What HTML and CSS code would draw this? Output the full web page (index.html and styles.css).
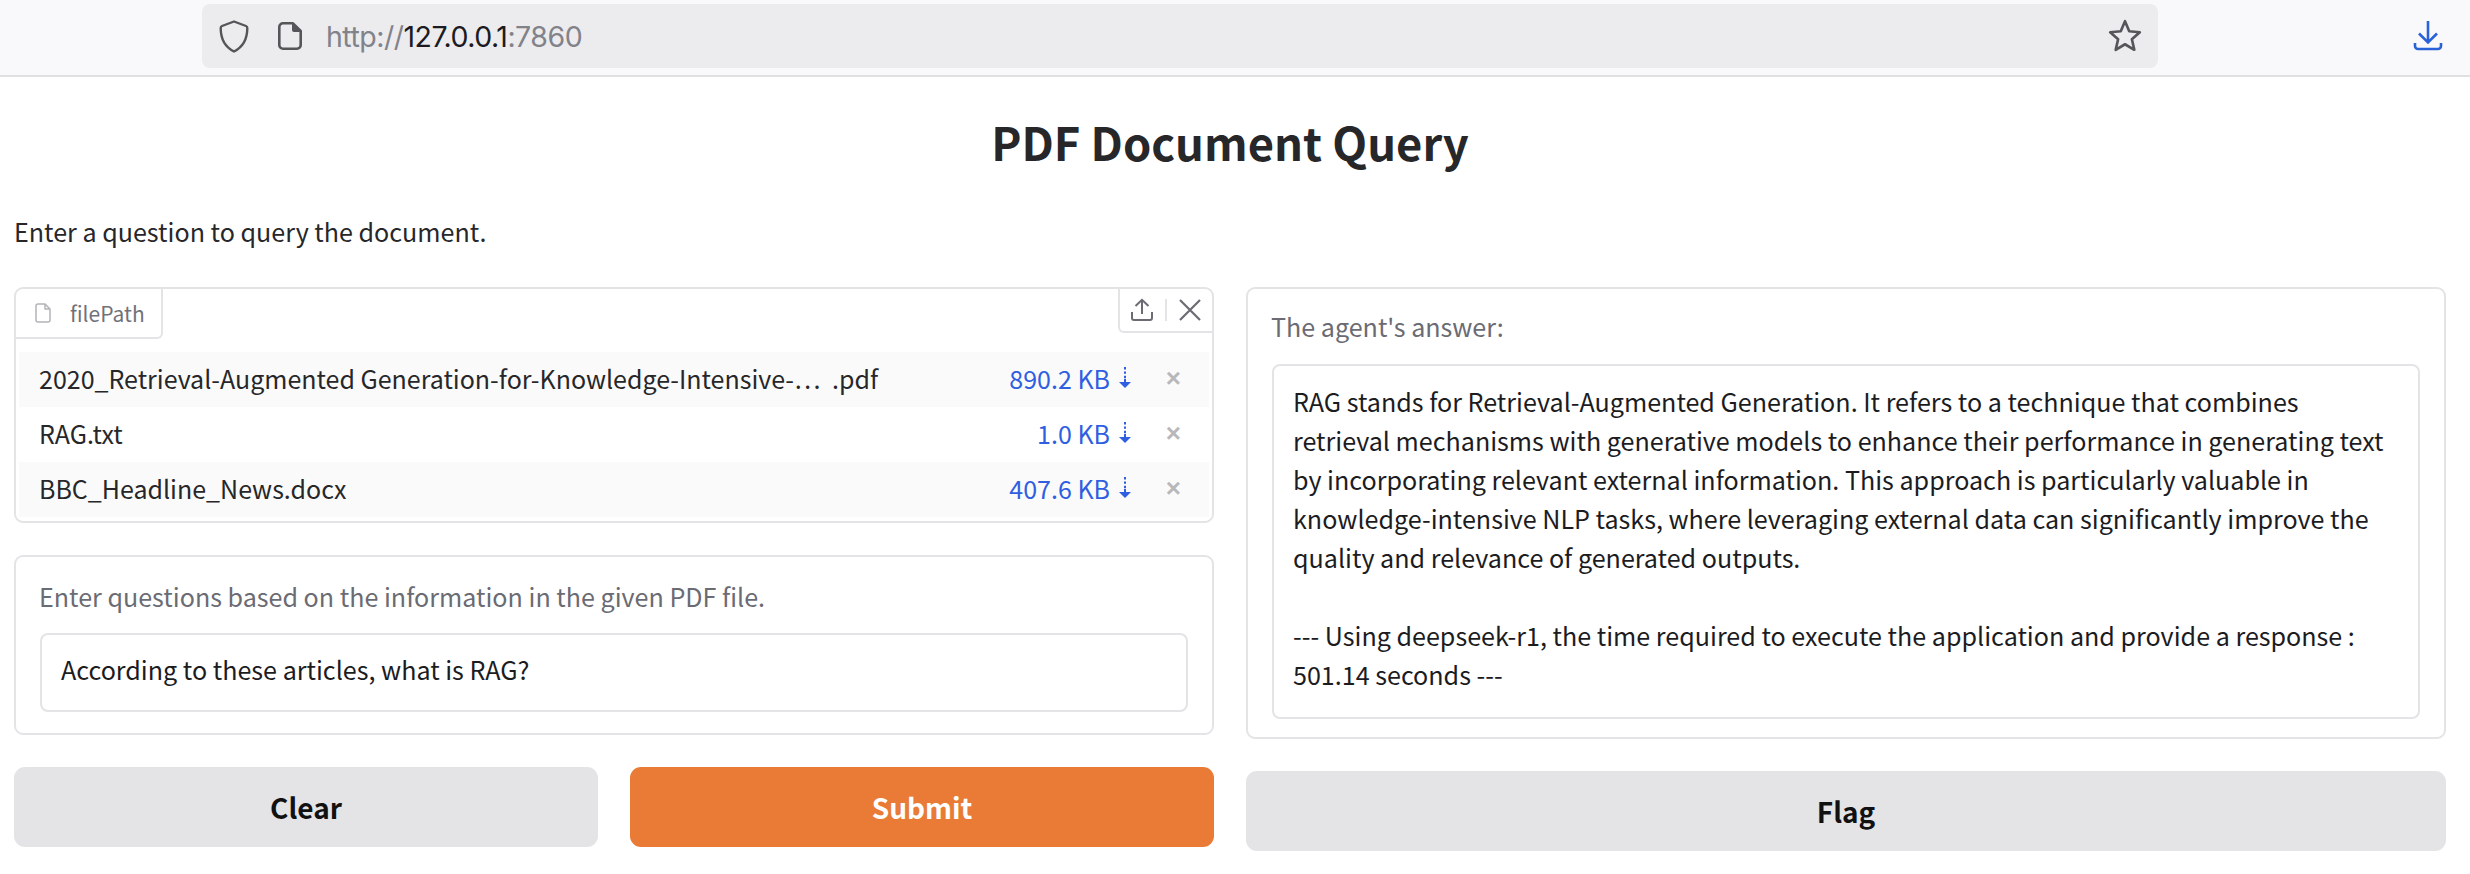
FILE: index.html

```html
<!DOCTYPE html>
<html lang="en">
<head>
  <meta charset="UTF-8">
  <title>PDF Document Query</title>
  <link rel="stylesheet" href="styles.css">
</head>
<body>
<header class="browser-bar">
  <div class="url-bar">
    <svg class="icon-shield" viewBox="0 0 30 33" width="30" height="33"><path d="M15 1.500 L27 6 C28 6.400 28.300 7 28.300 8 C28.300 18 24 27 15 31.500 C6 27 1.700 18 1.700 8 C1.700 7 2 6.400 3 6 Z" fill="none" stroke="#55555a" stroke-width="2.400" stroke-linejoin="round"/></svg>
    <svg class="icon-page" viewBox="0 0 24 28" width="24" height="28"><path d="M5 1.300 H15 L22.700 9 V23 A3.700 3.700 0 0 1 19 26.700 H5 A3.700 3.700 0 0 1 1.300 23 V5 A3.700 3.700 0 0 1 5 1.300 Z" fill="none" stroke="#55555a" stroke-width="2.600" stroke-linejoin="round"/><path d="M14 1.300 L22.700 10 H16 A2 2 0 0 1 14 8 Z" fill="#55555a"/></svg>
    <span class="url-text">http://<b>127.0.0.1</b>:7860</span>
    <svg class="icon-star" viewBox="0 0 34 34" width="36" height="36"><path d="M17 3 L21 12.500 L31 13.500 L23.500 20 L25.800 30 L17 24.800 L8.200 30 L10.500 20 L3 13.500 L13 12.500 Z" fill="none" stroke="#55555a" stroke-width="2.500" stroke-linejoin="round"/></svg>
  </div>
  <svg class="icon-download" viewBox="0 0 30 34" width="30" height="34"><path d="M15 2 V23 M6 14.500 L15 23.500 L24 14.500" fill="none" stroke="#2a63d8" stroke-width="2.600"/><path d="M2 24 V27 A3 3 0 0 0 5 30 H25 A3 3 0 0 0 28 27 V24" fill="none" stroke="#2a63d8" stroke-width="2.600"/></svg>
</header>

<main class="app">
  <h1 class="title">PDF Document Query</h1>
  <p class="intro">Enter a question to query the document.</p>

  <div class="columns">
    <section class="col">
      <div class="panel file-panel">
        <div class="file-head">
          <div class="file-tab">
            <svg viewBox="0 0 16 20" width="16" height="20"><path d="M3 1 H10 L15 6 V17 A2 2 0 0 1 13 19 H3 A2 2 0 0 1 1 17 V3 A2 2 0 0 1 3 1 Z M10 1 V6 H15" fill="none" stroke="#b4b4b9" stroke-width="1.500" stroke-linejoin="round"/></svg>
            <span>filePath</span>
          </div>
          <div class="file-actions">
            <svg viewBox="0 0 24 24" width="24" height="24"><path d="M2 14 V20 A2 2 0 0 0 4 22 H20 A2 2 0 0 0 22 20 V14 M12 16 V2 M5.500 8 L12 1.800 L18.500 8" fill="none" stroke="#6b6b73" stroke-width="2"/></svg>
            <i class="action-sep"></i>
            <svg viewBox="0 0 24 24" width="24" height="24"><path d="M2 2 L22 22 M22 2 L2 22" fill="none" stroke="#6b6b73" stroke-width="2.200"/></svg>
          </div>
        </div>
        <div class="file-list">
          <div class="file-row">
            <span class="file-name">2020_Retrieval-Augmented Generation-for-Knowledge-Intensive-…<span class="file-ext"> .pdf</span></span>
            <span class="file-size">890.2 KB</span>
            <svg class="arrow" viewBox="0 0 12 22" width="12" height="22"><path d="M6 0 V13" fill="none" stroke="#2f5fe0" stroke-width="2" stroke-dasharray="2.400 2"/><path d="M6 12 V17" fill="none" stroke="#2f5fe0" stroke-width="2"/><path d="M0 15 H12 L6 21 Z" fill="#2f5fe0"/></svg>
            <span class="file-x">×</span>
          </div>
          <div class="file-row">
            <span class="file-name">RAG.txt</span>
            <span class="file-size">1.0 KB</span>
            <svg class="arrow" viewBox="0 0 12 22" width="12" height="22"><path d="M6 0 V13" fill="none" stroke="#2f5fe0" stroke-width="2" stroke-dasharray="2.400 2"/><path d="M6 12 V17" fill="none" stroke="#2f5fe0" stroke-width="2"/><path d="M0 15 H12 L6 21 Z" fill="#2f5fe0"/></svg>
            <span class="file-x">×</span>
          </div>
          <div class="file-row">
            <span class="file-name">BBC_Headline_News.docx</span>
            <span class="file-size">407.6 KB</span>
            <svg class="arrow" viewBox="0 0 12 22" width="12" height="22"><path d="M6 0 V13" fill="none" stroke="#2f5fe0" stroke-width="2" stroke-dasharray="2.400 2"/><path d="M6 12 V17" fill="none" stroke="#2f5fe0" stroke-width="2"/><path d="M0 15 H12 L6 21 Z" fill="#2f5fe0"/></svg>
            <span class="file-x">×</span>
          </div>
        </div>
      </div>

      <div class="panel field-panel">
        <div class="field-label">Enter questions based on the information in the given PDF file.</div>
        <div class="field-box question">According to these articles, what is RAG?</div>
      </div>

      <div class="btn-row">
        <button class="btn">Clear</button>
        <button class="btn btn-primary">Submit</button>
      </div>
    </section>

    <section class="col">
      <div class="panel field-panel answer-panel">
        <div class="field-label">The agent's answer:</div>
        <div class="field-box answer">RAG stands for Retrieval-Augmented Generation. It refers to a technique that combines retrieval mechanisms with generative models to enhance their performance in generating text by incorporating relevant external information. This approach is particularly valuable in knowledge-intensive NLP tasks, where leveraging external data can significantly improve the quality and relevance of generated outputs.

--- Using deepseek-r1, the time required to execute the application and provide a response : 501.14 seconds ---</div>
      </div>
      <div class="btn-row">
        <button class="btn">Flag</button>
      </div>
    </section>
  </div>
</main>
</body>
</html>
```

FILE: styles.css

```css
html, body {
  margin: 0;
  padding: 0;
  background: #fff;
  overflow: hidden;
  font-family: "Noto Sans CJK SC", "Noto Sans", sans-serif;
  color: #27272a;
}
svg {
  flex: none;
}
.browser-bar {
  height: 75px;
  background: #f9f9fb;
  border-bottom: 2px solid #e0e0e2;
  display: flex;
  align-items: flex-start;
  padding-left: 202px;
}
.url-bar {
  width: 1956px;
  height: 64px;
  margin-top: 4px;
  background: #ececee;
  border-radius: 8px;
  display: flex;
  align-items: center;
  padding: 0 15px 0 17px;
  box-sizing: border-box;
}
.icon-page {
  margin-left: 29px;
}
.url-text {
  margin-left: 24px;
  font-family: Inter, "Liberation Sans", sans-serif;
  font-size: 28.5px;
  letter-spacing: -0.5px;
  color: #82828a;
  flex: 1;
}
.url-text b {
  font-weight: 400;
  color: #1c1b22;
}
.icon-download {
  margin: 19px 0 0 255px;
}
.app {
  padding: 0 24px 0 14px;
}
.title {
  margin: 0;
  padding-top: 38px;
  font-size: 45.3px;
  line-height: 52px;
  font-weight: 700;
  text-align: center;
}
.intro {
  margin: 0;
  padding-top: 44px;
  font-size: 25.1px;
  line-height: 40px;
}
.columns {
  margin-top: 36px;
  display: grid;
  grid-template-columns: 1200px 1200px;
  gap: 32px;
}
.col {
  display: flex;
  flex-direction: column;
}
.panel {
  background: #fff;
  border: 2px solid #e4e4e7;
  border-radius: 9px;
  box-sizing: border-box;
}
.file-panel {
  height: 236px;
}
.file-head {
  height: 63px;
  display: flex;
  justify-content: space-between;
  align-items: flex-start;
}
.file-tab {
  height: 50px;
  width: 147px;
  box-sizing: border-box;
  border-right: 2px solid #e4e4e7;
  border-bottom: 2px solid #e4e4e7;
  border-bottom-right-radius: 6px;
  display: flex;
  align-items: center;
  padding-left: 19px;
  gap: 19px;
  font-size: 21px;
  color: #71717a;
}
.file-actions {
  height: 44px;
  width: 94px;
  box-sizing: border-box;
  border-left: 2px solid #e4e4e7;
  border-bottom: 2px solid #e4e4e7;
  border-bottom-left-radius: 6px;
  display: flex;
  align-items: center;
  padding-left: 10px;
}
.action-sep {
  width: 2px;
  height: 22px;
  background: #e4e4e7;
  margin: 0 11px;
}
.file-list {
  margin: 0 3px;
}
.file-row {
  height: 55px;
  box-sizing: border-box;
  display: flex;
  align-items: center;
  padding: 0 0 3px 20px;
  font-size: 25px;
}
.file-row:nth-child(odd) {
  background: #fafafa;
}
.file-name {
  flex: 1;
  white-space: nowrap;
}
.file-ext {
  margin-left: 6px;
}
.file-size {
  color: #2f5fe0;
  white-space: nowrap;
}
.arrow {
  margin-left: 9px;
}
.file-x {
  width: 78px;
  padding-right: 28px;
  box-sizing: border-box;
  text-align: right;
  color: #b8b8bc;
  font-family: "Liberation Sans", sans-serif;
  font-weight: 700;
  font-size: 26px;
}
.field-panel {
  padding: 20px 24px 0;
}
.field-label {
  font-size: 25.1px;
  line-height: 38px;
  color: #6b6b73;
  margin-left: -1px;
}
.field-box {
  margin-top: 18px;
  border: 2px solid #e4e4e7;
  border-radius: 8px;
  box-sizing: border-box;
  font-size: 25.1px;
  line-height: 39px;
  color: #1c1c1f;
  padding: 15px 19px;
}
.question {
  height: 79px;
}
.answer {
  height: 355px;
  white-space: pre-wrap;
  padding-top: 16px;
  padding-right: 28px;
}
.col > .field-panel {
  margin-top: 32px;
  height: 180px;
}
.col > .answer-panel {
  margin-top: 0;
  height: 452px;
  padding-top: 18px;
}
.answer-panel .field-box {
  margin-top: 19px;
}
.btn-row {
  margin-top: 32px;
  display: flex;
  gap: 32px;
}
.btn {
  flex: 1;
  height: 80px;
  border: none;
  border-radius: 11px;
  background: #e4e4e7;
  color: #111;
  font-family: inherit;
  font-size: 28px;
  font-weight: 700;
}
.btn-primary {
  background: #e97b36;
  color: #fff;
}
```
